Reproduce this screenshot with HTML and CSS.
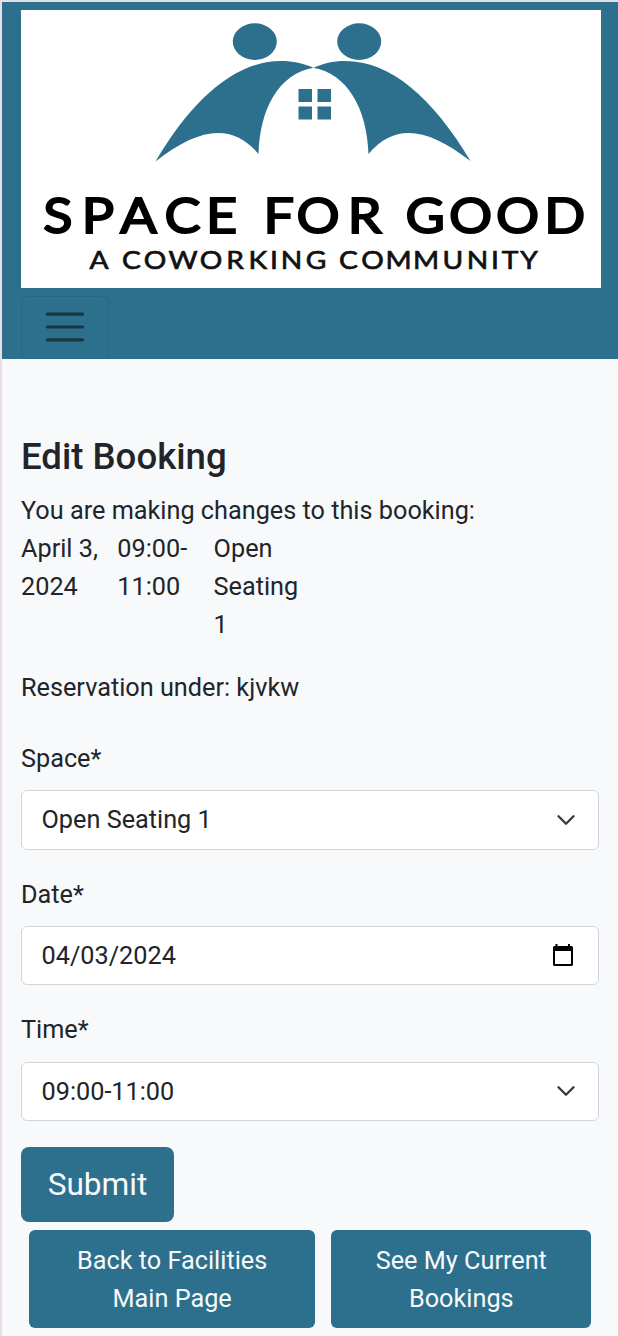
FILE: index.html
```html
<!DOCTYPE html>
<html lang="en">
<head>
<meta charset="utf-8">
<title>Edit Booking</title>
<link rel="stylesheet" href="styles.css">
</head>
<body>
<header class="navbar">
  <svg class="logo" viewBox="21 10 580 278" role="img" aria-label="Space for Good">
    <g class="logo-mark">
      <ellipse cx="254.800" cy="41.600" rx="22" ry="18.300"/>
      <ellipse cx="359.200" cy="41.600" rx="22" ry="18.300"/>
      <path d="M155.500 161.500C193 98 236 61 281 61C293 61 304 63.500 313.500 67.800C279 74 260 108 258.500 154C232 122 198 128 155.500 161.500Z"/>
      <path d="M470.500 161C433 98 391 61 345 61C333 61 323 63.500 313.500 67.800C347 74 367 108 368.500 154C395 122 428 128 470.500 161Z"/>
      <path d="M298.500 89H312V102H298.500ZM317.500 89H331V102H317.500ZM298.500 106.500H312V119.500H298.500ZM317.500 106.500H331V119.500H317.500Z"/>
    </g>
    <text class="logo-name" transform="scale(1.1 1)" y="233" x="52.700 89 125.900 166 201.500 229 253.300 289.100 331.500 357 386.500 427.700 470.500 513.500">SPACE FOR GOOD</text>
    <text class="logo-tag" transform="scale(1.1 1)" y="268.700" x="90 101 119.500 140.900 166.400 191.800 213.600 234.500 249.100 265 287.300 302 316.800 338.600 362.300 387.300 411.800 434.100 450 463.600 480.900">A COWORKING COMMUNITY</text>
  </svg>
  <button class="toggler" aria-label="Menu">
    <svg class="toggler-icon" viewBox="0 0 30 30"><path d="M4 7h22M4 15h22M4 23h22"/></svg>
  </button>
</header>
<main class="content">
  <h1 class="title">Edit Booking</h1>
  <p class="line">You are making changes to this booking:</p>
  <div class="details">
    <div>April 3, 2024</div>
    <div>09:00-<br>11:00</div>
    <div>Open Seating 1</div>
  </div>
  <p class="line reserved">Reservation under: kjvkw</p>
  <form class="form">
    <div class="field">
      <span class="label">Space*</span>
      <div class="control"><span>Open Seating 1</span><svg class="chevron" viewBox="0 0 16 16"><path d="m2 5 6 6 6-6"/></svg></div>
    </div>
    <div class="field">
      <span class="label">Date*</span>
      <div class="control"><span>04/03/2024</span><svg class="calendar" viewBox="0 0 22 24"><path fill-rule="evenodd" d="M3.500 1H5.500V3H16V1H18V3H19.500Q21 3 21 4.500V21.500Q21 23 19.500 23H2.500Q1 23 1 21.500V4.500Q1 3 2.500 3H3.500ZM3 8V21H19V8Z"/></svg></div>
    </div>
    <div class="field">
      <span class="label">Time*</span>
      <div class="control"><span>09:00-11:00</span><svg class="chevron" viewBox="0 0 16 16"><path d="m2 5 6 6 6-6"/></svg></div>
    </div>
    <button class="btn submit" type="button">Submit</button>
  </form>
  <div class="links">
    <a class="btn back">Back to Facilities<br>Main Page</a>
    <a class="btn current">See My Current<br>Bookings</a>
  </div>
</main>
</body>
</html>
```
FILE: styles.css
```css
* { box-sizing: border-box; }
body {
  margin: 0;
  height: 1336px;
  overflow: hidden;
  border-top: 2px solid #e2dfe6;
  border-left: 2px solid #eadfe5;
  background: #f8f9fb;
  color: #212529;
  font: 25.26px/38px Roboto, sans-serif;
}
.navbar {
  display: flex;
  flex-direction: column;
  align-items: flex-start;
  gap: 8px;
  height: 357px;
  padding: 8px 17px 0 19px;
  background: #2d708e;
}
.logo { display: block; width: 580px; height: 278px; background: #fff; }
.logo-mark { fill: #2d708e; }
.logo-name, .logo-tag { font-family: Lato, sans-serif; font-weight: 400; text-anchor: middle; }
.logo-name { font-size: 49px; stroke: #000; stroke-width: 2; }
.logo-tag { font-size: 25.600px; fill: #111; stroke: #111; stroke-width: 0.700; }
.toggler {
  display: flex;
  align-items: center;
  justify-content: center;
  width: 88px;
  height: 62.500px;
  padding: 0;
  border: 1.5px solid #296681;
  border-radius: 6px;
  background: none;
}
.toggler-icon { width: 48px; height: 48px; }
.toggler-icon path { stroke: #183642; stroke-width: 2; stroke-linecap: round; fill: none; }
.content { padding: 75px 19px 0; }
.title { margin: 0 0 11.500px; font-size: 36.600px; font-weight: 500; line-height: 46px; }
.line { margin: 0; }
.details { display: grid; grid-template-columns: 80px 80px 90px; column-gap: 16.300px; }
.reserved { margin-top: 25px; }
.form { padding-top: 33px; }
.field { height: 135.800px; }
.field:nth-child(2) .label { padding-top: 0.500px; margin-bottom: 12px; }
.label { display: block; margin-bottom: 12.500px; }
.control {
  display: flex;
  align-items: center;
  justify-content: space-between;
  width: 578px;
  height: 59.500px;
  padding: 1px 19px 0 19.500px;
  border: 1.5px solid #d0d5dc;
  border-radius: 6px;
  background: #fff;
}
.chevron { width: 20px; height: 20px; margin: 0 3px 1px 0; }
.chevron path { fill: none; stroke: #343a40; stroke-width: 1.900; stroke-linecap: round; stroke-linejoin: round; }
.calendar { width: 22px; height: 24px; margin: 0 5px 2px 0; }
.btn {
  display: flex;
  align-items: center;
  justify-content: center;
  border: 0;
  border-radius: 6px;
  background: #2d708e;
  color: #f8f9fb;
  text-align: center;
}
.submit { width: 153px; height: 75px; padding: 1px 0 0; border-radius: 8px; font: 31.600px/48px Roboto, sans-serif; }
.links { display: flex; gap: 16px; margin-top: 8.500px; padding-left: 8px; }
.links .btn { height: 98px; padding-top: 1px; }
.back { width: 286.300px; }
.current { width: 260px; }
```
